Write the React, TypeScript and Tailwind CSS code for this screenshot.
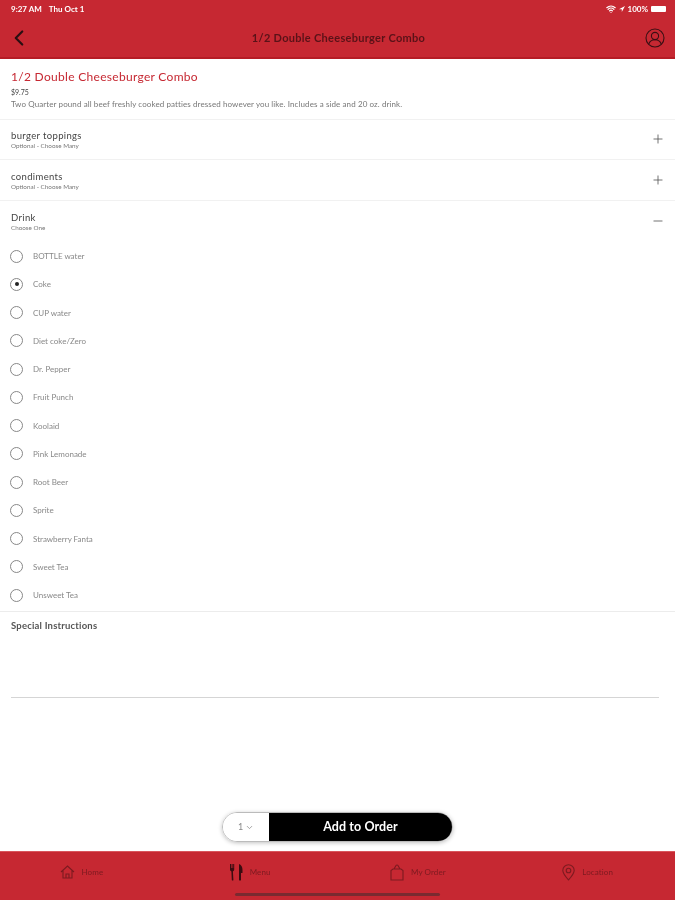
import React from "react";
import { ChevronLeft, ChevronDown, Plus, Minus, Wifi } from "lucide-react";

const drinks = ["BOTTLE water","Coke","CUP water","Diet coke/Zero","Dr. Pepper","Fruit Punch","Koolaid","Pink Lemonade","Root Beer","Sprite","Strawberry Fanta","Sweet Tea","Unsweet Tea"];

function Group({ title, sub, open, h, pt, border = true }: { title: string; sub: string; open?: boolean; h: string; pt: string; border?: boolean }) {
  return (
    <div className={`flex justify-between pl-[11px] pr-[10px] shrink-0 ${pt} ${h} ${border ? "border-b border-[#f1f1f1]" : ""}`}>
      <div>
        <div className="text-[9.5px] leading-[12px] tracking-[0.35px] text-[#444]">{title}</div>
        <div className="text-[6.3px] leading-[8px] text-[#777]">{sub}</div>
      </div>
      <div className="pt-[2px] text-[#555]">
        {open ? <Minus size={14} strokeWidth={1.4} /> : <Plus size={14} strokeWidth={1.4} />}
      </div>
    </div>
  );
}

function Nav({ icon, label }: { icon: React.ReactNode; label: string }) {
  return (
    <div className="flex items-center gap-[7px] h-[20px]">
      {icon}
      <span className="text-[8px] tracking-[0.1px] text-[#7d1a20]">{label}</span>
    </div>
  );
}

export default function App() {
  return (
    <div className="w-[675px] h-[900px] flex flex-col bg-white font-['Lato','Liberation_Sans',sans-serif] overflow-hidden blur-[0.4px]">
      <header className="h-[59px] shrink-0 bg-[#c62832] border-b-2 border-[#b51c25] flex flex-col">
        <div className="h-[16px] flex items-center justify-between pl-[11px] pr-[9px] pt-[1px] text-[8px] font-bold text-white">
          <div className="flex gap-[7px]"><span>9:27 AM</span><span>Thu Oct 1</span></div>
          <div className="flex items-center gap-[3px]">
            <Wifi size={10} strokeWidth={3} />
            <svg width="6" height="6" viewBox="0 0 6 6"><path d="M6 0 0 3.2h2.8V6z" fill="#fff" /></svg>
            <span>100%</span>
            <div className="w-[15px] h-[6px] rounded-[1px] bg-white" />
          </div>
        </div>
        <div className="flex-1 flex items-center justify-between pl-[6px] pr-[10px] pt-[3px]">
          <ChevronLeft size={26} strokeWidth={2} className="text-[#2a0f12]" />
          <span className="text-[11px] font-bold tracking-[0.3px] text-[#5a1218]">1/2 Double Cheeseburger Combo</span>
          <svg width="20" height="20" viewBox="0 0 20 20" fill="none" stroke="#3a1014" strokeWidth="1.1">
            <circle cx="10" cy="10" r="9" />
            <circle cx="10" cy="8" r="3.6" />
            <path d="M3.8 16c1-3 3.4-4.2 6.2-4.2s5.200 1.200 6.200 4.200" />
          </svg>
        </div>
      </header>

      <div className="px-[11px] pt-[10px] h-[61px] shrink-0 border-b border-[#f1f1f1]">
        <div className="text-[12px] leading-[15px] tracking-[0.3px] text-[#c62832]">1/2 Double Cheeseburger Combo</div>
        <div className="text-[7px] leading-[9px] mt-[4px] text-[#444]">$9.75</div>
        <div className="text-[8px] leading-[9px] mt-[3px] tracking-[0.1px] text-[#777]">Two Quarter pound all beef freshly cooked patties dressed however you like. Includes a side and 20 oz. drink.</div>
      </div>

      <Group title="burger toppings" sub="Optional - Choose Many" h="h-[40px]" pt="pt-[10px]" />
      <Group title="condiments" sub="Optional - Choose Many" h="h-[41px]" pt="pt-[11px]" />
      <Group title="Drink" sub="Choose One" open h="h-[41px]" pt="pt-[11px]" border={false} />

      <div className="flex flex-col pl-[10px] h-[370px] shrink-0 border-b border-[#ececec]">
        {drinks.map((d, i) => (
          <div key={d} className="h-[28.25px] shrink-0 flex items-center gap-[10px]">
            <div className="w-[13px] h-[13px] rounded-full border border-[#888] flex items-center justify-center">
              {i === 1 && <div className="w-[4px] h-[4px] rounded-full bg-[#222]" />}
            </div>
            <span className="text-[8px] text-[#888]">{d}</span>
          </div>
        ))}
      </div>

      <div className="px-[11px] pt-[8px] h-[87px] shrink-0">
        <div className="text-[9.5px] leading-[12px] font-bold tracking-[0.2px] text-[#555]">Special Instructions</div>
        <div className="mt-[65px] border-b border-[#d5d5d5] mr-[5px]" />
      </div>

      <div className="flex-1 flex items-end justify-center pb-[9px]">
        <div className="w-[231px] h-[30px] flex rounded-full overflow-hidden border border-[#bbb] shadow-[0_1px_4px_rgba(0,0,0,0.25)]">
          <div className="w-[46px] bg-white flex items-center justify-center gap-[2px] text-[9px] text-[#888]">
            1<ChevronDown size={9} />
          </div>
          <div className="flex-1 bg-black text-white font-bold text-[12.5px] tracking-[0.1px] flex items-center justify-center">Add to Order</div>
        </div>
      </div>

      <footer className="h-[49px] shrink-0 bg-[#c62832] border-t border-[#d9555c] relative">
        <div className="grid grid-cols-4 h-[40px] pt-[10px] items-start">
          <div className="flex justify-center pr-[6px]">
            <Nav label="Home" icon={
              <svg width="15" height="14" viewBox="0 0 15 14" fill="none" stroke="#7d1a20" strokeWidth="1.100"><path d="M1 7 7.500 1 14 7M3 5.500V13h9V5.500M6 13V9h3v4" /></svg>
            } />
          </div>
          <div className="flex justify-center pr-[6px]">
            <Nav label="Menu" icon={
              <svg width="13" height="17" viewBox="0 0 13 17" fill="#3a0c10"><path d="M0 0h1v4h.6V0h1v4h.6V0h1v5.500c0 1-.7 1.600-1.300 1.900L3.400 16c0 .8-1.600.8-1.600 0l-.4-8.600C.7 7.100 0 6.500 0 5.500zM9 0c2 .5 3.500 3 3.500 6v3H11v7c0 .8-2 .8-2 0z" /></svg>
            } />
          </div>
          <div className="flex justify-center pr-[8px]">
            <Nav label="My Order" icon={
              <svg width="14" height="17" viewBox="0 0 14 17" fill="none" stroke="#7d1a20" strokeWidth="1.100"><path d="M4 5 6 1.500C6.500.8 7.500.8 8 1.500L10 5M1 16V6.500L3 5h8l2 1.500V16z" /></svg>
            } />
          </div>
          <div className="flex justify-center pr-[6px]">
            <Nav label="Location" icon={
              <svg width="13" height="17" viewBox="0 0 13 17" fill="none" stroke="#7d1a20" strokeWidth="1.100"><path d="M6.500 16C3 12 .8 9.500.8 6.500a5.700 5.700 0 0 1 11.400 0C12.200 9.500 10 12 6.500 16z" /><circle cx="6.500" cy="6.500" r="2.300" /></svg>
            } />
          </div>
        </div>
        <div className="absolute left-[235px] top-[41px] w-[205px] h-[3px] rounded-full bg-[#7a2a30]" />
      </footer>
    </div>
  );
}
